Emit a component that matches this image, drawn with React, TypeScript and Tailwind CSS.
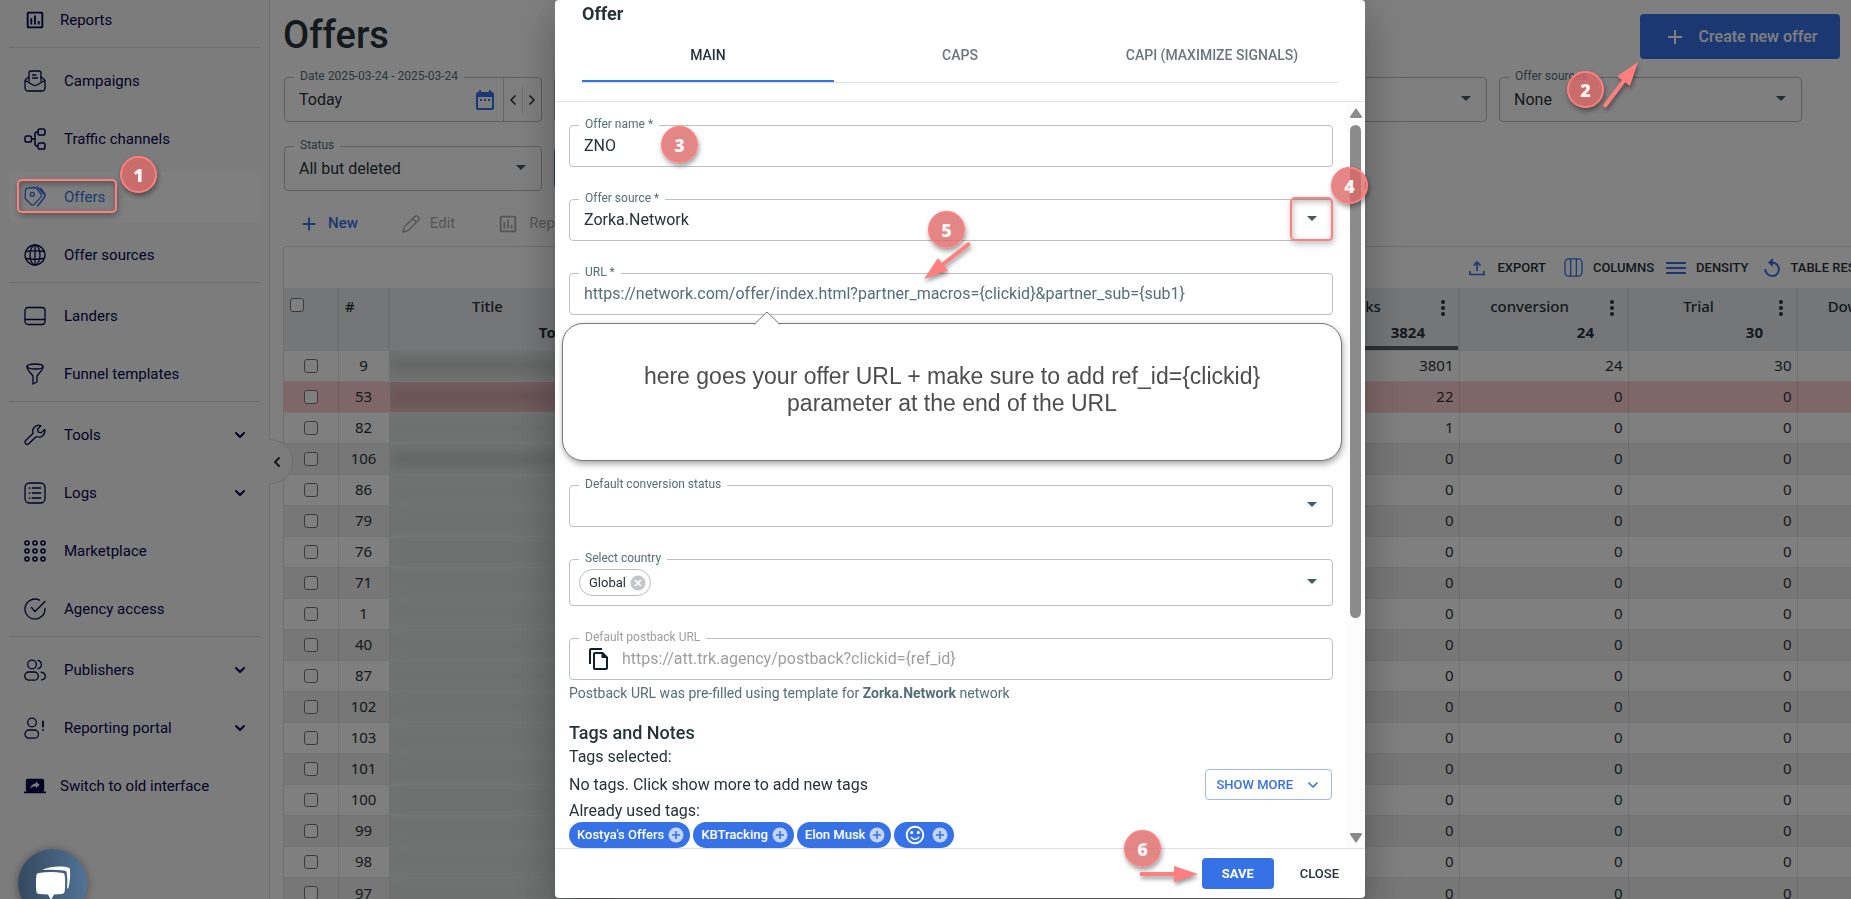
import { useState } from "react";
import type { ReactNode } from "react";
import { ChevronDown, ChevronLeft, ChevronRight } from "lucide-react";
import { MdAdd, MdScreenShare, MdSentimentSatisfiedAlt, MdOutlineAssessment } from "react-icons/md";

const ids = [9, 53, 82, 106, 86, 79, 76, 71, 1, 40, 87, 102, 103, 101, 100, 99, 98, 97];
const clicks = [3801, 22, 1];

function Line({ children }: { children: ReactNode }) {
    return (
        <svg viewBox="0 0 22 22" className="h-[22px] w-[22px]" fill="none" stroke="currentColor" strokeWidth="1.3" strokeLinecap="round" strokeLinejoin="round">
            {children}
        </svg>
    );
}

const icons: Record<string, ReactNode> = {
    campaigns: (
        <Line>
            <path d="M5 11V3.200C5 2 5.800 1 7 1h8c1.200 0 2 1 2 2.200V11M8.500 5h3.500M8.500 8h5" />
            <path d="M5 7 2.200 9C1.400 9.600 1 10.200 1 11v6.500C1 19.500 2.300 21 4.300 21h13.400c2 0 3.300-1.500 3.300-3.500V11c0-.8-.4-1.400-1.200-2L17 7M1.300 10.500l7.200 4.300c1.600.9 3.400.9 5 0l7.200-4.300" />
        </Line>
    ),
    channels: (
        <Line>
            <g strokeWidth="1.500">
                <rect x="1" y="8" width="6.500" height="6" rx="1.800" />
                <rect x="14" y="1" width="7" height="6" rx="1.800" />
                <rect x="14" y="15" width="7" height="6" rx="1.800" />
                <path d="M7.500 11h3.500M14 4h-1c-1.300 0-2 .7-2 2v10c0 1.300.7 2 2 2h1" />
            </g>
        </Line>
    ),
    offers: (
        <Line>
            <path d="M4 2.200 10.500 1.500c.8 0 1.500.2 2 .8l4.200 5.200c1 1.300.9 2.800-.1 3.900l-6.300 7c-.9 1-2.200 1-3.100.1L2 13.500c-.6-.6-.9-1.300-.9-2.100L1.500 4.500C1.600 3 2.500 2.300 4 2.200Z" />
            <circle cx="8.300" cy="8.300" r="2" />
            <path d="m13.500 1 6.400 7c1 1.200 1 2.600 0 3.800L13.500 20M16.500 2.500l3.800 4.300c1 1.300 1 3.800 0 5L14 19.700" />
        </Line>
    ),
    globe: (
        <Line>
            <circle cx="11" cy="11" r="10" />
            <ellipse cx="11" cy="11" rx="5" ry="10" />
            <path d="M11 1v20M2 7.500c5.500-1 12.500-1 18 0M2 14.500c5.500 1 12.500 1 18 0" />
        </Line>
    ),
    landers: (
        <Line>
            <rect x="1" y="2.500" width="20" height="17" rx="3" />
            <path d="M1 14.500h20" />
        </Line>
    ),
    funnel: (
        <Line>
            <ellipse cx="11" cy="3.500" rx="8" ry="2.500" />
            <path d="M3 3.500c0 2 .7 3.200 2 4.700l4 4.800v8l4-2v-6l4-4.800c1.300-1.500 2-2.700 2-4.700" />
        </Line>
    ),
    tools: (
        <Line>
            <path d="M15.500 1.300a6 6 0 0 0-6.400 8L1.700 16.500a2.300 2.300 0 0 0 0 3.200c.9.900 2.200.9 3.100 0l7.500-7.200a6 6 0 0 0 8.400-7l-3.400 3.300-3-.6-.8-3 3.400-3.500c-.4-.2-.9-.4-1.400-.4Z" />
        </Line>
    ),
    logs: (
        <Line>
            <rect x="1" y="1" width="20" height="20" rx="4.500" />
            <path d="M5.500 6h.1M5.500 11h.1M5.500 16h.1M8.500 6h8M8.500 11h8M8.500 16h8" strokeWidth="1.700" />
        </Line>
    ),
    market: (
        <Line>
            {[3, 11, 19].map((y) => [3, 11, 19].map((x) => <circle key={`${x}-${y}`} cx={x} cy={y} r="2" strokeWidth="1.600" />))}
        </Line>
    ),
    agency: (
        <Line>
            <path d="M15.500 2.100A10 10 0 1 0 21 10.500M7.500 9.500l3.500 4L21 3.500" />
        </Line>
    ),
    publishers: (
        <Line>
            <circle cx="8" cy="5.500" r="4.300" />
            <path d="M14 1.300a4.300 4.300 0 0 1 0 8.400" />
            <rect x="0.800" y="13" width="13.500" height="8.200" rx="4" />
            <path d="M17 13.200c2.500.4 4.300 1.900 4.300 4s-1.500 3.400-3.800 3.700" />
        </Line>
    ),
    portal: (
        <Line>
            <circle cx="8" cy="5.500" r="4.300" />
            <rect x="1" y="13" width="13.500" height="8.200" rx="4" />
            <path d="M19 4.500v5M19 13h.1" strokeWidth="1.800" />
        </Line>
    ),
};

type Item = { label: string; icon: ReactNode; open?: boolean; active?: boolean; tight?: boolean };

const groups: Item[][] = [
    [{ label: "Reports", icon: <MdOutlineAssessment className="h-[22px] w-[22px]" />, tight: true }],
    [
        { label: "Campaigns", icon: icons.campaigns },
        { label: "Traffic channels", icon: icons.channels },
        { label: "Offers", icon: icons.offers, active: true },
        { label: "Offer sources", icon: icons.globe },
    ],
    [
        { label: "Landers", icon: icons.landers },
        { label: "Funnel templates", icon: icons.funnel },
    ],
    [
        { label: "Tools", icon: icons.tools, open: true },
        { label: "Logs", icon: icons.logs, open: true },
        { label: "Marketplace", icon: icons.market },
        { label: "Agency access", icon: icons.agency },
    ],
    [
        { label: "Publishers", icon: icons.publishers, open: true },
        { label: "Reporting portal", icon: icons.portal, open: true },
        { label: "Switch to old interface", icon: <MdScreenShare className="h-[22px] w-[22px]" />, tight: true },
    ],
];

function Sidebar() {
    return (
        <aside className="relative w-[270px] shrink-0 border-r border-[#dcdcdc] bg-[#f8f8f8] text-[15px] text-[#05054a]">
            <nav className="-mt-[5px] px-[9px]">
                {groups.map((group, i) => (
                    <div key={i}>
                        {i > 0 && <hr className="mt-0.5 mb-2 border-[#d8d8d8]" />}
                        <div className="flex flex-col gap-2">
                            {group.map((item) => (
                                <a
                                    key={item.label}
                                    href="#"
                                    className={`flex h-[50px] items-center rounded-md pl-[15px] pr-3 ${item.active ? "bg-white text-[#3771e6]" : ""}`}
                                >
                                    {item.icon}
                                    <span className={item.tight ? "ml-3.5" : "ml-[18px]"}>{item.label}</span>
                                    {item.open && <ChevronDown className="ml-auto h-4 w-4" strokeWidth={3} />}
                                </a>
                            ))}
                        </div>
                    </div>
                ))}
            </nav>
            <button aria-label="Collapse menu" className="absolute top-[439px] left-[269px] z-10 flex h-[45px] w-6 items-center rounded-r-full border border-l-0 border-[#dcdcdc] bg-[#f8f8f8] text-[#263238]">
                <ChevronLeft className="h-4 w-4" strokeWidth={3} />
            </button>
        </aside>
    );
}

function Caret() {
    return (
        <svg viewBox="0 0 10 5" className="pointer-events-none absolute top-1/2 right-[15px] h-[5px] w-2.5 -translate-y-1 text-[#455a64]">
            <path d="M0 0h10L5 5z" fill="currentColor" />
        </svg>
    );
}

function Field({ id, label, muted, className = "h-[42px]", children }: { id?: string; label?: string; muted?: boolean; className?: string; children?: ReactNode }) {
    return (
        <div className={`relative flex items-center rounded border border-[#bfbfbf] ${className}`}>
            {label && (
                <label htmlFor={id} className={`absolute -top-2 left-[9px] bg-white px-1.5 text-xs leading-3 ${muted ? "text-[#9e9e9e]" : "text-[#546e7a]"}`}>
                    {label}
                </label>
            )}
            {children}
        </div>
    );
}

function SelectBox({ id, value }: { id: string; value: string }) {
    return (
        <>
            <select id={id} className="h-full w-full appearance-none bg-transparent px-3.5 text-[#263238] outline-none">
                <option>{value}</option>
            </select>
            <Caret />
        </>
    );
}

function Kebab() {
    return (
        <svg viewBox="0 0 4 16" className="absolute top-3 right-[13px] h-4 w-1">
            <circle cx="2" cy="2" r="2" fill="currentColor" />
            <circle cx="2" cy="8" r="2" fill="currentColor" />
            <circle cx="2" cy="14" r="2" fill="currentColor" />
        </svg>
    );
}

function HeadCell({ label, total, sorted, kebab = true }: { label?: string; total?: string | number; sorted?: boolean; kebab?: boolean }) {
    return (
        <th className={`relative h-[62px] border-r-2 border-[#dcdfe3] p-0 align-top font-medium ${sorted ? "shadow-[inset_0_-4px_0_#5a6266]" : ""}`}>
            <div className="pt-2 pr-7 leading-5">{label}</div>
            <div className="pt-1.5 pr-[33px] text-right leading-5 font-bold">{total}</div>
            {kebab && label && <Kebab />}
        </th>
    );
}

function OffersTable() {
    return (
        <table className="w-max table-fixed border-collapse font-['Noto_Sans','Open_Sans',sans-serif] text-[15px] text-[#263238]">
            <colgroup>
                <col className="w-[54px]" />
                <col className="w-[51px]" />
                <col className="w-[225px]" />
                {[0, 1, 2, 3, 4, 5, 6, 7].map((n) => (
                    <col key={n} className="w-[169px]" />
                ))}
            </colgroup>
            <thead>
                <tr className="bg-[#e9ecf0]">
                    <th className="border-r-2 border-[#dcdfe3] p-0 pt-2.5 pl-1.5 text-left align-top">
                        <input type="checkbox" aria-label="Select all" className="block h-3.5 w-3.5 appearance-none rounded-[3px] border border-[#767676] bg-white" />
                    </th>
                    <th className="border-r-2 border-[#dcdfe3] p-0 pt-2 pl-1.5 text-left align-top leading-5 font-medium">#</th>
                    <HeadCell label="Title" total="Total:" kebab={false} />
                    <HeadCell />
                    <HeadCell />
                    <HeadCell />
                    <HeadCell />
                    <HeadCell label="Clicks" total={3824} sorted />
                    <HeadCell label="conversion" total={24} />
                    <HeadCell label="Trial" total={30} />
                    <HeadCell label="Downloads" total={0} />
                </tr>
            </thead>
            <tbody>
                {ids.map((id, i) => (
                    <tr key={id} className={`h-[31px] border-t border-[#e8e8e8] ${id === 53 ? "bg-[#ffcdd2]" : i % 2 ? "bg-[#efefef]" : "bg-white"}`}>
                        <td className="border-r border-black/10 p-0">
                            <input type="checkbox" aria-label={`Select offer ${id}`} className="mx-auto block h-3.5 w-3.5 appearance-none rounded-[3px] border border-[#767676] bg-white" />
                        </td>
                        <td className="border-r border-black/10 p-0 text-center">{id}</td>
                        <td className={`overflow-hidden p-0 ${id === 53 ? "bg-[#e8bcc1]" : "bg-[#e3e5e5]"}`}>
                            <div className={`h-4 blur-[6px] ${id === 53 ? "bg-[#cfa5a9]" : i === 0 || i === 3 ? "bg-[#c9cbcb]" : "bg-[#dcdede]"}`} />
                        </td>
                        <td colSpan={4} />
                        <td className="border-r border-black/10 p-0 pr-[5px] text-right">{clicks[i] ?? 0}</td>
                        <td className="border-r border-black/10 p-0 pr-[5px] text-right">{i === 0 ? 24 : 0}</td>
                        <td className="border-r border-black/10 p-0 pr-[5px] text-right">{i === 0 ? 30 : 0}</td>
                        <td className="p-0 pr-[5px] text-right">0</td>
                    </tr>
                ))}
            </tbody>
        </table>
    );
}

function Toolbar() {
    return (
        <div className="flex h-[41px] items-center justify-end gap-3 pr-24 text-[13px] font-medium text-[#263238]">
            <button className="flex items-center gap-3">
                <svg viewBox="0 0 16 16" className="h-4 w-4 text-[#3771e6]" fill="none" stroke="currentColor" strokeWidth="1.700">
                    <path d="M1 11v3.500h14V11M8 11V2M4.500 5.500 8 2l3.500 3.500" />
                </svg>
                EXPORT
            </button>
            <button className="ml-1.5 flex items-center gap-2.5">
                <svg viewBox="0 0 20 20" className="h-[19px] w-[19px] text-[#3771e6]" fill="none" stroke="currentColor" strokeWidth="1.400">
                    <rect x="1" y="1" width="18" height="18" rx="4" />
                    <path d="M7 1v18M13 1v18" />
                </svg>
                COLUMNS
            </button>
            <button className="flex items-center gap-2.5">
                <svg viewBox="0 0 20 14" className="h-3.5 w-5 text-[#3771e6]" stroke="currentColor" strokeWidth="2">
                    <path d="M0 2h20M0 7h20M0 12h20" />
                </svg>
                DENSITY
            </button>
            <button className="ml-1 flex items-center gap-2.5">
                <svg viewBox="0 0 16 20" className="h-5 w-4 text-[#3771e6]" fill="none" stroke="currentColor" strokeWidth="2">
                    <path d="M1.300 11a6.800 6.800 0 1 0 6.700-6.500H5" />
                    <path d="M9 0v9L4 4.500z" fill="currentColor" stroke="none" />
                </svg>
                TABLE RESET
            </button>
        </div>
    );
}

function OffersPage() {
    return (
        <main className="min-w-0 flex-1 overflow-hidden pl-[13px] text-[#263238]">
            <div className="flex h-[77px] items-start justify-between pr-[11px]">
                <h1 className="mt-[13px] text-[38px] leading-[44px] font-medium">Offers</h1>
                <button className="mt-3.5 flex h-[45px] w-[200px] items-center justify-center gap-3 rounded bg-[#3771e6] font-medium text-white">
                    <MdAdd className="h-6 w-6" />
                    Create new offer
                </button>
            </div>
            <div className="ml-px mr-[49px] grid grid-cols-[258px_repeat(4,1fr)] gap-x-3 gap-y-6">
                <Field id="date" label="Date 2025-03-24 - 2025-03-24" className="h-[45px]">
                    <input id="date" readOnly value="Today" className="min-w-0 flex-1 bg-transparent pl-3.5 outline-none" />
                    <svg viewBox="0 0 18 20" className="mr-[9px] h-5 w-[18px] text-[#3771e6]">
                        <path d="M3 0h2v2h8V0h2v2h1a2 2 0 0 1 2 2v14a2 2 0 0 1-2 2H2a2 2 0 0 1-2-2V4a2 2 0 0 1 2-2h1zM2 7v11h14V7zM4 9h2v2H4zM8 9h2v2H8zM12 9h2v2h-2z" fill="currentColor" fillRule="evenodd" />
                    </svg>
                    <div className="flex h-full items-center border-l border-[#c8c8c8]">
                        <button aria-label="Previous day" className="flex h-7 w-[19px] items-center justify-center border-r border-[#d8d8d8]">
                            <ChevronLeft className="h-4 w-4" strokeWidth={2.5} />
                        </button>
                        <button aria-label="Next day" className="flex h-7 w-[18px] items-center justify-center">
                            <ChevronRight className="h-4 w-4" strokeWidth={2.5} />
                        </button>
                    </div>
                </Field>
                <Field className="h-[45px]" />
                <Field className="h-[45px]" />
                <Field className="h-[45px]">
                    <Caret />
                </Field>
                <Field id="sources" label="Offer sources" className="h-[45px]">
                    <SelectBox id="sources" value="None" />
                </Field>
                <Field id="status" label="Status" className="h-[45px]">
                    <SelectBox id="status" value="All but deleted" />
                </Field>
                <button aria-label="Apply" className="mt-0.5 h-10 w-24 rounded bg-[#3771e6]" />
            </div>
            <div className="flex h-[55px] items-center gap-8 pt-2.5 pl-[15px] text-[15px] text-[#ababab]">
                <button className="flex items-center gap-2 font-medium text-[#3771e6]">
                    <MdAdd className="h-[22px] w-[22px]" />
                    New
                </button>
                <button disabled className="ml-3 flex items-center gap-2.5">
                    <svg viewBox="0 0 18 18" className="h-[18px] w-[18px]" fill="none" stroke="currentColor" strokeWidth="1.400" strokeLinejoin="round">
                        <path d="m1 17 1.200-5L12.500 1.800a2.600 2.600 0 0 1 3.700 3.700L6 15.800zM10.800 3.500l3.700 3.700" />
                    </svg>
                    Edit
                </button>
                <button disabled className="ml-2.5 flex items-center gap-2.5">
                    <MdOutlineAssessment className="h-[22px] w-[22px]" />
                    Report
                </button>
            </div>
            <section className="w-max rounded border border-r-0 border-[#e0e0e0] bg-white">
                <Toolbar />
                <OffersTable />
            </section>
        </main>
    );
}

function Tag({ children }: { children: ReactNode }) {
    return (
        <button className="flex h-[26px] items-center gap-1 rounded-full bg-[#3771e6] pr-1.5 pl-2 text-[13px] font-medium text-white">
            {children}
            <svg viewBox="0 0 16 16" className="h-4 w-4">
                <circle cx="8" cy="8" r="7.500" fill="#c1d3f7" />
                <path d="M8 4v8M4 8h8" stroke="#3771e6" strokeWidth="1.600" />
            </svg>
        </button>
    );
}

function Badge({ n, className }: { n: number; className: string }) {
    return (
        <span className={`absolute flex h-[37px] w-[37px] items-center justify-center rounded-full border-2 border-[#fd7e7e] bg-[#db6868]/80 font-['Open_Sans',sans-serif] text-lg font-extrabold text-white/90 shadow-[1px_3px_5px_rgba(0,0,0,0.4)] ${className}`}>
            {n}
        </span>
    );
}

/* Arrow drawn along the x axis and turned to its direction */
function Arrow({ length, turn, className }: { length: number; turn: number; className: string }) {
    return (
        <svg width="80" height="80" viewBox="-40 -40 80 80" className={`pointer-events-none absolute overflow-visible drop-shadow-[1px_3px_2px_rgba(0,0,0,0.4)] ${className}`}>
            <g transform={`rotate(${turn})`} fill="#ff7f7f">
                <path d={`M${-length} -2H-22V2H${-length}z`} />
                <path d="M-24 -8 0 0-24 8z" />
            </g>
        </svg>
    );
}

const tabs = ["MAIN", "CAPS", "CAPI (MAXIMIZE SIGNALS)"];

function OfferDialog() {
    const [tab, setTab] = useState("MAIN");
    const [name, setName] = useState("ZNO");
    const [url, setUrl] = useState("https://network.com/offer/index.html?partner_macros={clickid}&partner_sub={sub1}");

    return (
        <div role="dialog" aria-label="Offer" className="relative flex h-full w-[810px] flex-col rounded bg-white text-[#263238] shadow-[0_11px_15px_-7px_rgba(0,0,0,0.2),0_24px_38px_3px_rgba(0,0,0,0.14),0_9px_46px_8px_rgba(0,0,0,0.12)]">
            <header className="border-b border-[#e0e0e0] px-[27px] pb-[18px]">
                <h2 className="pt-0.5 text-lg leading-6 font-bold">Offer</h2>
                <div role="tablist" className="mt-0.5 grid grid-cols-3 border-b border-[#e0e0e0]">
                    {tabs.map((t) => (
                        <button
                            key={t}
                            role="tab"
                            aria-selected={tab === t}
                            onClick={() => setTab(t)}
                            className={`h-[54px] border-b-2 pt-0.5 text-sm font-medium ${tab === t ? "border-[#3771e6]" : "border-transparent text-[#6b767b]"}`}
                        >
                            {t}
                        </button>
                    ))}
                </div>
            </header>

            <div className="flex min-h-0 flex-1 overflow-hidden">
                <div className="min-w-0 flex-1 pt-[23px] pr-[13px] pl-3.5">
                    <div className="flex flex-col gap-8">
                        <Field id="name" label="Offer name *">
                            <input id="name" value={name} onChange={(e) => setName(e.target.value)} className="w-full bg-transparent px-3.5 outline-none" />
                        </Field>
                        <Field id="source" label="Offer source *">
                            <SelectBox id="source" value="Zorka.Network" />
                        </Field>
                        <Field id="url" label="URL *">
                            <input id="url" value={url} onChange={(e) => setUrl(e.target.value)} className="w-full bg-transparent px-3.5 text-[#546e7a] outline-none" />
                        </Field>
                        <div className="mt-[138px]">
                            <Field id="conversion" label="Default conversion status">
                                <SelectBox id="conversion" value="" />
                            </Field>
                        </div>
                        <Field label="Select country" className="h-[47px]">
                            <span className="ml-[9px] flex h-[27px] items-center gap-1 rounded-full border border-[#bdbdbd] pr-1 pl-[9px] text-[13px]">
                                Global
                                <button aria-label="Remove Global">
                                    <svg viewBox="0 0 16 16" className="h-4 w-4">
                                        <circle cx="8" cy="8" r="7.500" fill="#c4c6c7" />
                                        <path d="m5 5 6 6M11 5l-6 6" stroke="#fff" strokeWidth="1.700" />
                                    </svg>
                                </button>
                            </span>
                            <Caret />
                        </Field>
                        <Field id="postback" label="Default postback URL" muted>
                            <button aria-label="Copy postback URL" className="ml-[19px]">
                                <svg viewBox="0 0 20 22" className="h-[22px] w-5 text-[#0a1f30]">
                                    <path d="M13 0H2C.9 0 0 .9 0 2v14h2V2h11zM7 4h7l5 5v11a2 2 0 0 1-2 2H6a2 2 0 0 1-2-2V6c0-1.100.9-2 2-2zm-1 2v14h11v-10h-4.500V6z" fill="currentColor" fillRule="evenodd" />
                                </svg>
                            </button>
                            <input id="postback" disabled value="https://att.trk.agency/postback?clickid={ref_id}" className="ml-[13px] min-w-0 flex-1 bg-transparent text-[#9e9e9e]" />
                        </Field>
                    </div>
                    <p className="mt-1 text-sm leading-[18px] text-[#546e7a]">
                        Postback URL was pre-filled using template for <b>Zorka.Network</b> network
                    </p>
                    <h3 className="mt-[19px] text-lg leading-6 font-medium">Tags and Notes</h3>
                    <p className="leading-6">Tags selected:</p>
                    <div className="flex items-center justify-between">
                        <p>No tags. Click show more to add new tags</p>
                        <button className="mr-px flex h-[31px] items-center gap-3 rounded border border-[#9bb8f3] px-2.5 text-[13px] font-medium text-[#3771e6]">
                            SHOW MORE
                            <ChevronDown className="h-4 w-4" strokeWidth={2.5} />
                        </button>
                    </div>
                    <p className="leading-[22px]">Already used tags:</p>
                    <div className="flex gap-[3px]">
                        <Tag>Kostya's Offers</Tag>
                        <Tag>KBTracking</Tag>
                        <Tag>Elon Musk</Tag>
                        <Tag>
                            <MdSentimentSatisfiedAlt className="mr-0.5 ml-0.5 h-[22px] w-[22px]" />
                        </Tag>
                    </div>
                </div>
                <div aria-hidden="true" className="flex w-[19px] flex-col items-center bg-[#fcfcfc] pt-[6px] pb-[5px] text-[#8b8b8b]">
                    <svg viewBox="0 0 12 10" className="h-2.5 w-3"><path d="M6 0 12 8.500 11.500 10H.5L0 8.500z" fill="currentColor" /></svg>
                    <div className="mt-[7px] h-[493px] w-[11px] rounded-full bg-[#8b8b8b]" />
                    <svg viewBox="0 0 12 10" className="mt-auto h-2.5 w-3"><path d="M6 10 12 1.500 11.500 0H.5L0 1.500z" fill="currentColor" /></svg>
                </div>
            </div>

            <footer className="flex h-[50px] items-center justify-end gap-[18px] border-t border-[#e0e0e0] pr-[18px]">
                <button className="h-[31px] w-[72px] rounded bg-[#3771e6] text-[13px] font-bold text-white">SAVE</button>
                <button className="px-2 text-[13px] font-medium">CLOSE</button>
            </footer>

            {/* Callout under the URL field */}
            <div className="absolute top-[323px] right-[23px] left-[7px] flex h-[138px] flex-col items-center rounded-[21px] border border-[#777] bg-white pt-[39px] shadow-[1px_3px_6px_rgba(0,0,0,0.35)]">
                <svg viewBox="0 0 26 14" className="absolute -top-[13px] left-[191px] h-3.5 w-[26px]">
                    <path d="M0 13.500 13 1l13 12.500" fill="#fff" stroke="#777" />
                </svg>
                <p className="text-center font-['Liberation_Sans',Arial,sans-serif] text-[23px] leading-[27px] text-[#4d4d4d]">
                    here goes your offer URL + make sure to add ref_id={"{clickid}"}
                    <br />
                    parameter at the end of the URL
                </p>
            </div>
            <div className="absolute top-[197px] right-8 h-[44px] w-[43px] rounded-[5px] border-2 border-[#ff8080] shadow-[1px_3px_6px_rgba(0,0,0,0.25),inset_1px_3px_6px_rgba(0,0,0,0.25)]" />
            <Badge n={3} className="top-[126px] left-[106px]" />
            <Badge n={4} className="top-[167px] -right-[3px]" />
            <Badge n={5} className="top-[211px] left-[373px]" />
            <Arrow length={58} turn={142} className="top-[239px] left-[329px]" />
            <Badge n={6} className="right-[204px] bottom-[31px]" />
            <Arrow length={58} turn={0} className="right-[127px] -bottom-4" />
        </div>
    );
}

export default function App() {
    return (
        <div className="relative h-screen overflow-hidden bg-white font-[Roboto,sans-serif] text-base">
            <div className="flex h-full">
                <Sidebar />
                <OffersPage />
            </div>
            <div className="fixed inset-0 z-20 flex justify-center bg-black/50 pb-px pl-[69px]">
                <OfferDialog />
            </div>
            <div className="pointer-events-none absolute inset-0 z-30">
                <div className="absolute top-[179px] left-[17px] h-[34px] w-[100px] rounded-[5px] border-2 border-[#fd7e7e] shadow-[1px_3px_6px_rgba(0,0,0,0.3),inset_1px_3px_6px_rgba(0,0,0,0.3)]" />
                <Badge n={1} className="top-[156px] left-[120px]" />
                <Badge n={2} className="top-[71px] right-[247px]" />
                <Arrow length={56} turn={-53} className="top-[22px] right-[173px]" />
            </div>
            <button aria-label="Open chat" className="fixed -bottom-[19px] left-[18px] z-30 flex h-[69px] w-[69px] items-center justify-center rounded-full bg-linear-to-r from-[#35495e] to-[#517296] shadow-[0_1px_8px_rgba(0,0,0,0.4)]">
                <svg viewBox="0 0 36 36" className="h-9 w-9" fill="#fff">
                    <path d="M7 4C16 0 27 0 33 1.500c1.300.3 2 1 2 2.200.3 7.300 0 12.300-1.700 18.600l-1.300.2c.6-6 .4-11-.2-15.500-.2-1.700-1-2.500-2.600-2.600C22 3.700 15 3.700 7 4z" />
                    <path d="M4 7c8-1.300 16-1.300 23.500 0 1.400.3 2 1 2.200 2.300.6 5.500.6 10.700 0 16-.2 1.500-1 2.400-2.500 2.600l-8.200.7L16 34l-3-5.400L4 28c-1.600-.2-2.400-1-2.600-2.500-.6-5.400-.6-10.700 0-16C1.600 8 2.400 7.200 4 7z" />
                </svg>
            </button>
        </div>
    );
}
